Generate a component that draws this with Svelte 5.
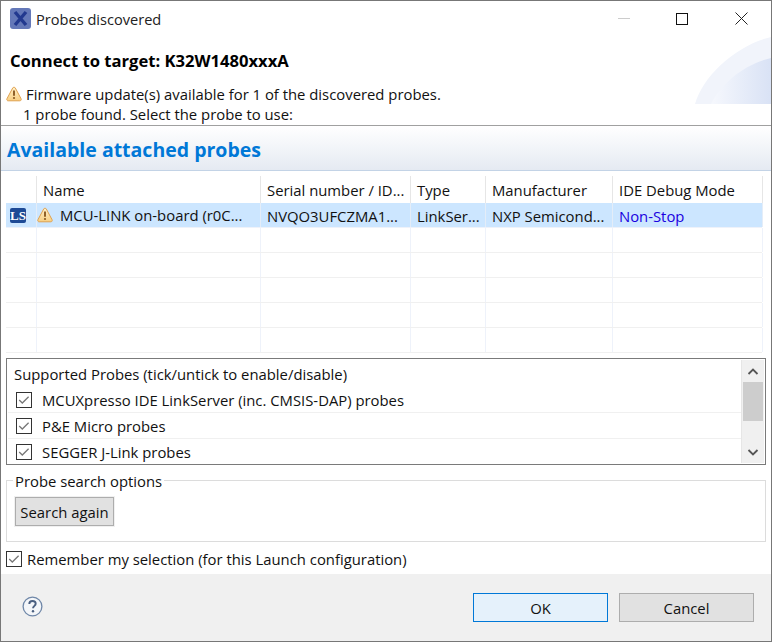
<script>
  const columns = ['', 'Name', 'Serial number / ID...', 'Type', 'Manufacturer', 'IDE Debug Mode'];
  const emptyRows = [1, 2, 3, 4, 5];
  const probes = ['MCUXpresso IDE LinkServer (inc. CMSIS-DAP) probes', 'P&E Micro probes', 'SEGGER J-Link probes'];
</script>

{#snippet warn(cls)}
  <svg class={cls} width="16" height="16" viewBox="0 0 16 16">
    <defs>
      <linearGradient id="wg{cls}" x1="0" y1="0" x2="0" y2="1"><stop offset="0" stop-color="#fff0c8"/><stop offset="1" stop-color="#f8cf82"/></linearGradient>
    </defs>
    <path d="M8 1.2 C8.6 1.2 9 1.5 9.3 2 L15 12.6 C15.6 13.8 15 14.8 13.8 14.8 H2.2 C1 14.8 .4 13.8 1 12.6 L6.7 2 C7 1.5 7.4 1.2 8 1.2Z" fill="url(#wg{cls})" stroke="#dfa14f" stroke-width="1"/>
    <path d="M8 4.6 V9.8" stroke="#8a5a22" stroke-width="1.9"/>
    <circle cx="8" cy="12" r="1.1" fill="#8a5a22"/>
  </svg>
{/snippet}

{#snippet check()}
  <svg class="check" width="16" height="16" viewBox="0 0 16 16">
    <rect x=".5" y=".5" width="15" height="15" fill="#fff" stroke="#333"/>
    <path d="M3.2 8 L6.3 11 L12.6 4.8" fill="none" stroke="#777" stroke-width="1.3"/>
  </svg>
{/snippet}

<div class="window">
  <svg class="swoosh" width="76" height="68" viewBox="0 0 76 68">
    <defs>
      <linearGradient id="sw" x1="0" y1="0" x2="1" y2="0"><stop offset="0" stop-color="#f6f8fd"/><stop offset="1" stop-color="#d9e2f5"/></linearGradient>
    </defs>
    <path d="M0 67 C8 38 42 8 76 0 V67Z" fill="#f1f4fb"/>
    <path d="M16 67 C26 46 50 27 76 21 V67Z" fill="url(#sw)"/>
  </svg>

  <header class="titlebar">
    <svg class="logo" width="21" height="21" viewBox="0 0 21 21">
      <rect x="0" y="0" width="21" height="21" rx="3" fill="#6478b8"/>
      <path d="M5 4 L16 17 M16 4 L5 17" stroke="#22398f" stroke-width="3.4"/>
    </svg>
    <span class="wintitle">Probes discovered</span>
    <div class="controls">
      <span class="min"></span>
      <span class="max"></span>
      <svg class="close" width="13" height="13" viewBox="0 0 13 13"><path d="M.5 .5 L12.5 12.5 M12.5 .5 L.5 12.5" stroke="#222" stroke-width="1"/></svg>
    </div>
  </header>

  <section class="intro">
    <h1>Connect to target: K32W1480xxxA</h1>
    <p class="fw">{@render warn('w1')}<span>Firmware update(s) available for 1 of the discovered probes.</span></p>
    <p class="found">1 probe found. Select the probe to use:</p>
  </section>

  <h2 class="banner">Available attached probes</h2>

  <div class="table">
    <div class="grid head">
      {#each columns as c}<div class="cell">{c}</div>{/each}
    </div>
    <div class="grid row selected">
      <div class="cell icon"><span class="ls">LS</span></div>
      <div class="cell name">{@render warn('w2')}<span>MCU-LINK on-board (r0C...</span></div>
      <div class="cell">NVQO3UFCZMA1...</div>
      <div class="cell">LinkSer...</div>
      <div class="cell">NXP Semicond...</div>
      <div class="cell mode">Non-Stop</div>
    </div>
    {#each emptyRows as r}
      <div class="grid row">
        {#each columns as c}<div class="cell"></div>{/each}
      </div>
    {/each}
  </div>

  <div class="supported">
    <div class="list">
      <div class="caption">Supported Probes (tick/untick to enable/disable)</div>
      {#each probes as p}
        <div class="probe">{@render check()}<span>{p}</span></div>
      {/each}
    </div>
    <div class="scrollbar">
      <svg width="20" height="22" viewBox="0 0 20 22"><path d="M5.5 14 L10 9.5 L14.5 14" fill="none" stroke="#555" stroke-width="1.8"/></svg>
      <div class="track"><div class="thumb"></div></div>
      <svg width="20" height="22" viewBox="0 0 20 22"><path d="M5.5 9 L10 13.5 L14.5 9" fill="none" stroke="#555" stroke-width="1.8"/></svg>
    </div>
  </div>

  <div class="options">
    <span class="legend">Probe search options</span>
    <button class="btn search">Search again</button>
  </div>

  <div class="remember">{@render check()}<span>Remember my selection (for this Launch configuration)</span></div>

  <footer class="footer">
    <svg class="help" width="21" height="21" viewBox="0 0 21 21">
      <circle cx="10.5" cy="10.5" r="9.4" fill="#f4f6f9" stroke="#6f87a8" stroke-width="1.3"/>
      <path d="M7.3 8 C7.3 5.9 8.9 5 10.5 5 C12.3 5 13.7 6.1 13.7 7.8 C13.7 9.8 11 10 11 12.3" fill="none" stroke="#4a5f80" stroke-width="1.9"/>
      <circle cx="11" cy="15.2" r="1.2" fill="#4a5f80"/>
    </svg>
    <div class="actions">
      <button class="btn ok">OK</button>
      <button class="btn cancel">Cancel</button>
    </div>
  </footer>
</div>

<style>
  :global(body) { margin: 0; background: #fff; }
  .window {
    position: relative;
    box-sizing: border-box;
    width: 772px;
    height: 642px;
    border: 1px solid #777;
    background: #fff;
    display: flex;
    flex-direction: column;
    font-family: "Open Sans", "Noto Sans", sans-serif;
    font-size: 14.85px;
    color: #111;
    overflow: hidden;
  }
  .swoosh { position: absolute; right: 0; top: 36px; }
  .titlebar {
    box-sizing: border-box;
    height: 37px;
    flex: none;
    display: flex;
    align-items: center;
    padding: 0 0 2px 9px;
    position: relative;
  }
  .logo { margin-right: 5px; }
  .wintitle { font-size: 14.6px; color: #222; }
  .controls { margin-left: auto; display: flex; align-items: center; }
  .min { width: 12px; height: 1px; background: #ccc; margin-right: 46px; }
  .max { box-sizing: border-box; width: 12px; height: 12px; border: 1px solid #111; margin-right: 47px; }
  .close { margin-right: 23px; }
  .intro { height: 88px; flex: none; position: relative; box-sizing: border-box; border-bottom: 1px solid #a0a0a0; }
  h1 { margin: 13px 0 0 9px; font-size: 16.6px; line-height: 20px; font-weight: 700; color: #000; }
  .fw { margin: 13px 0 0 5px; display: flex; align-items: center; height: 20px; gap: 4px; }
  .found { margin: 0 0 0 22px; line-height: 20px; }
  .banner {
    margin: 0;
    height: 45px;
    flex: none;
    box-sizing: border-box;
    padding-left: 6px;
    font-size: 19.5px;
    line-height: 47px;
    font-weight: 700;
    color: #0078d7;
    background: linear-gradient(#fff, #e5eaf2);
    border-bottom: 1px solid #c3d3e6;
  }
  .table { margin: 5px 9px 0 5px; flex: none; }
  .grid { display: grid; grid-template-columns: 31px 224px 150px 75px 127px 150px; }
  .head { height: 27px; }
  .head .cell { border-right: 1.5px solid #e6e6e6; line-height: 29px; }
  .row { height: 25px; box-sizing: border-box; border-bottom: 1px solid #f0f0f0; }
  .cell { box-sizing: border-box; padding-left: 6px; white-space: nowrap; overflow: hidden; border-right: 1.5px solid #eef2fa; line-height: 26px; }
  .selected { background: #cce6ff; border-bottom-color: #eef2fa; }
  .selected .cell { border-right-color: #e4edf8; }
  .cell.icon { padding-left: 4px; display: flex; align-items: center; }
  .ls {
    width: 16px; height: 15px; border-radius: 2px; background: #1d4a96; color: #fff;
    font-family: "Liberation Serif", serif; font-weight: 700; font-size: 13px; line-height: 15px; text-align: center;
  }
  .cell.name { display: flex; align-items: center; gap: 7px; padding-left: 0; }
  .mode { color: #1a00e0; }
  .supported {
    margin: 5px 5px 0 5px;
    height: 107px;
    flex: none;
    box-sizing: border-box;
    border: 1px solid #7a7a7a;
    display: flex;
  }
  .list { flex: 1; padding-left: 1px; }
  .caption { padding-left: 6px; height: 28px; line-height: 31px; }
  .probe {
    height: 26px;
    box-sizing: border-box;
    border-bottom: 1px solid #f0f0f0;
    display: flex;
    align-items: center;
    gap: 10px;
    padding-left: 8px;
  }
  .probe:last-child { border-bottom: 0; }
  .scrollbar {
    width: 22px; margin: 1px 1px 1px 0; background: #f0f0f0; border-left: 1px solid #e6e6e6;
    display: flex; flex-direction: column; align-items: center;
  }
  .track { flex: 1; width: 20px; }
  .thumb { height: 39px; background: #cdcdcd; }
  .options {
    position: relative;
    margin: 15px 5px 0 5px;
    padding: 16px 0 0 8px;
    height: 62px;
    flex: none;
    box-sizing: border-box;
    border: 1px solid #dcdcdc;
  }
  .legend { position: absolute; left: 6px; top: -10px; padding: 0 2px; line-height: 20px; background: #fff; }
  .btn {
    box-sizing: border-box;
    font: inherit;
    color: #111;
    background: #e1e1e1;
    border: 1px solid #adadad;
    padding: 0;
  }
  .search { display: block; width: 99px; height: 29px; box-shadow: 0 0 0 1px #f0f0f0; }
  .remember { margin: 8px 0 0 5px; height: 17px; display: flex; align-items: center; gap: 5px; flex: none; }
  .footer {
    margin-top: auto;
    height: 67px;
    flex: none;
    background: #f0f0f0;
    display: flex;
    align-items: flex-start;
    position: relative;
  }
  .help { margin: 22px 0 0 21px; }
  .actions { margin: 19px 17px 0 auto; display: flex; gap: 11px; }
  .ok, .cancel { width: 135px; height: 29px; }
  .ok { background: #e5f1fb; border-color: #0078d7; }
</style>
